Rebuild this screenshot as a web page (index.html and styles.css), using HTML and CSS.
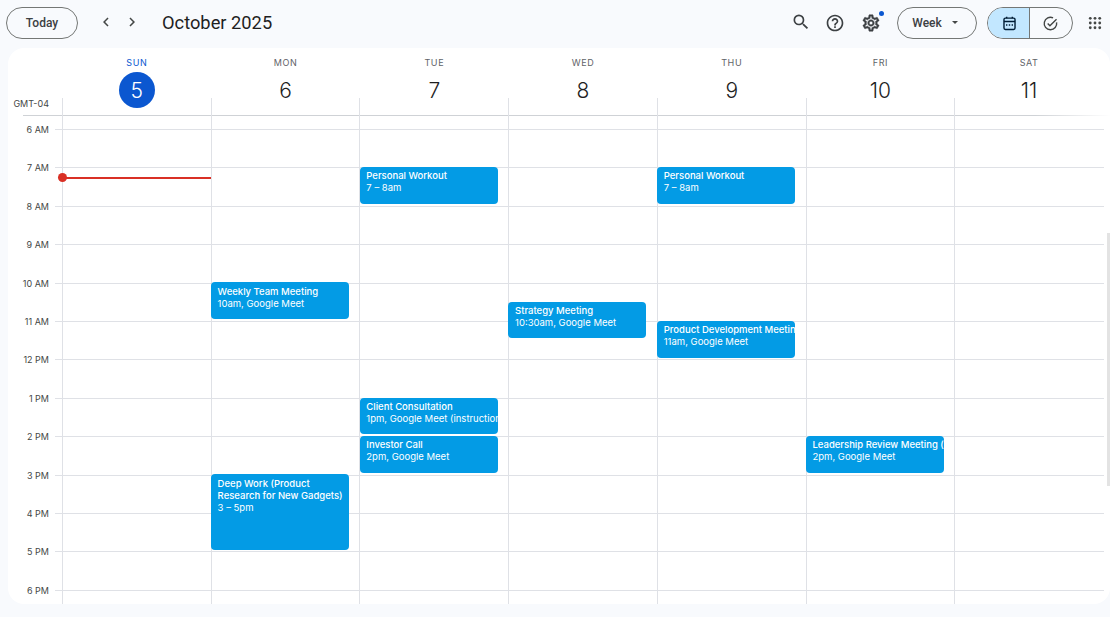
FILE: index.html
```html
<!DOCTYPE html>
<html lang="en">
<head>
<meta charset="utf-8">
<title>Calendar - October 2025</title>
<link rel="stylesheet" href="styles.css">
</head>
<body>
<header class="toolbar">
  <button class="pill today">Today</button>
  <div class="nav">
    <svg class="chev" viewBox="0 0 24 24"><path d="M15.4 7.4 14 6l-6 6 6 6 1.4-1.4L10.8 12z"/></svg>
    <svg class="chev" viewBox="0 0 24 24"><path d="M8.6 7.4 10 6l6 6-6 6-1.4-1.4 4.6-4.6z"/></svg>
  </div>
  <h1 class="title">October 2025</h1>
  <div class="spacer"></div>
  <svg class="icon search" viewBox="0 0 24 24"><path d="M15.5 14h-.79l-.28-.27A6.471 6.471 0 0 0 16 9.5 6.5 6.5 0 1 0 9.5 16c1.61 0 3.09-.59 4.23-1.57l.27.28v.79l5 4.99L20.49 19l-4.99-5zm-6 0C7.01 14 5 11.99 5 9.5S7.01 5 9.5 5 14 7.01 14 9.5 11.99 14 9.5 14z"/></svg>
  <svg class="icon help" viewBox="0 0 24 24"><path d="M11 18h2v-2h-2v2zm1-16C6.48 2 2 6.48 2 12s4.48 10 10 10 10-4.48 10-10S17.52 2 12 2zm0 18c-4.41 0-8-3.59-8-8s3.59-8 8-8 8 3.59 8 8-3.59 8-8 8zm0-14c-2.21 0-4 1.79-4 4h2c0-1.1.9-2 2-2s2 .9 2 2c0 2-3 1.75-3 5h2c0-2.25 3-2.5 3-5 0-2.21-1.79-4-4-4z"/></svg>
  <div class="gear-wrap">
    <svg class="icon gear" viewBox="0 0 24 24"><path d="M19.43 12.98c.04-.32.07-.64.07-.98 0-.34-.03-.66-.07-.98l2.11-1.65c.19-.15.24-.42.12-.64l-2-3.46c-.09-.16-.26-.25-.44-.25-.06 0-.12.01-.17.03l-2.49 1c-.52-.4-1.08-.73-1.69-.98l-.38-2.65C14.46 2.18 14.25 2 14 2h-4c-.25 0-.46.18-.49.42l-.38 2.65c-.61.25-1.17.59-1.69.98l-2.49-1c-.06-.02-.12-.03-.18-.03-.17 0-.34.09-.43.25l-2 3.46c-.13.22-.07.49.12.64l2.11 1.65c-.04.32-.07.65-.07.98 0 .33.03.66.07.98l-2.11 1.65c-.19.15-.24.42-.12.64l2 3.46c.09.16.26.25.44.25.06 0 .12-.01.17-.03l2.49-1c.52.4 1.08.73 1.69.98l.38 2.65c.03.24.24.42.49.42h4c.25 0 .46-.18.49-.42l.38-2.65c.61-.25 1.17-.59 1.69-.98l2.49 1c.06.02.12.03.18.03.17 0 .34-.09.43-.25l2-3.46c.12-.22.07-.49-.12-.64l-2.11-1.65zm-1.98-1.71c.04.31.05.52.05.73 0 .21-.02.43-.05.73l-.14 1.13.89.7 1.08.84-.7 1.21-1.27-.51-1.04-.42-.9.68c-.43.32-.84.56-1.25.73l-1.06.43-.16 1.13-.2 1.35h-1.4l-.19-1.35-.16-1.13-1.06-.43c-.43-.18-.83-.41-1.23-.71l-.91-.7-1.06.43-1.27.51-.7-1.21 1.08-.84.89-.7-.14-1.13c-.03-.31-.05-.54-.05-.74s.02-.43.05-.73l.14-1.13-.89-.7-1.08-.84.7-1.21 1.27.51 1.04.42.9-.68c.43-.32.84-.56 1.25-.73l1.06-.43.16-1.13.2-1.35h1.39l.19 1.35.16 1.13 1.06.43c.43.18.83.41 1.23.71l.91.7 1.06-.43 1.27-.51.7 1.21-1.07.85-.89.7.14 1.13zM12 8c-2.21 0-4 1.79-4 4s1.79 4 4 4 4-1.79 4-4-1.79-4-4-4zm0 6c-1.1 0-2-.9-2-2s.9-2 2-2 2 .9 2 2-.9 2-2 2z"/></svg>
    <span class="gear-dot"></span>
  </div>
  <button class="pill week">Week<span class="caret"></span></button>
  <div class="toggle">
    <div class="toggle-part active">
      <svg class="tog-icon" viewBox="0 0 24 24"><path d="M8 2.5v2.2M16 2.5v2.2" class="ln"/><rect x="4.2" y="4.4" width="15.6" height="16" rx="2" class="ln"/><path d="M4.2 9.2h15.6" class="ln"/><path d="M7 13.2h2v2H7zM11 13.2h2v2h-2zM15 13.2h2v2h-2z"/></svg>
    </div>
    <div class="toggle-part">
      <svg class="tog-icon" viewBox="0 0 24 24"><path d="M20.6 10.4A8.8 8.8 0 1 1 15.6 4" class="ln"/><path d="M8 12l3.2 3.2L20.5 6" class="ln"/></svg>
    </div>
  </div>
  <svg class="apps" viewBox="0 0 16 16"><circle cx="2.6" cy="2.6" r="1.6"/><circle cx="8" cy="2.6" r="1.6"/><circle cx="13.4" cy="2.6" r="1.6"/><circle cx="2.6" cy="8" r="1.6"/><circle cx="8" cy="8" r="1.6"/><circle cx="13.4" cy="8" r="1.6"/><circle cx="2.6" cy="13.4" r="1.6"/><circle cx="8" cy="13.4" r="1.6"/><circle cx="13.4" cy="13.4" r="1.6"/></svg>
</header>

<main class="card">
  <section class="heads">
    <div class="tz">GMT-04</div>
    <div class="head today-col"><div class="dow">SUN</div><div class="num-row"><span class="num">5</span></div></div>
    <div class="head"><div class="dow">MON</div><div class="num-row"><span class="num">6</span></div></div>
    <div class="head"><div class="dow">TUE</div><div class="num-row"><span class="num">7</span></div></div>
    <div class="head"><div class="dow">WED</div><div class="num-row"><span class="num">8</span></div></div>
    <div class="head"><div class="dow">THU</div><div class="num-row"><span class="num">9</span></div></div>
    <div class="head"><div class="dow">FRI</div><div class="num-row"><span class="num">10</span></div></div>
    <div class="head"><div class="dow">SAT</div><div class="num-row"><span class="num">11</span></div></div>
  </section>

  <section class="timeline">
    <div class="hour"><span class="hour-label">6 AM</span><span class="hour-line"></span></div>
    <div class="hour"><span class="hour-label">7 AM</span><span class="hour-line"></span></div>
    <div class="hour"><span class="hour-label">8 AM</span><span class="hour-line"></span></div>
    <div class="hour"><span class="hour-label">9 AM</span><span class="hour-line"></span></div>
    <div class="hour"><span class="hour-label">10 AM</span><span class="hour-line"></span></div>
    <div class="hour"><span class="hour-label">11 AM</span><span class="hour-line"></span></div>
    <div class="hour"><span class="hour-label">12 PM</span><span class="hour-line"></span></div>
    <div class="hour"><span class="hour-label">1 PM</span><span class="hour-line"></span></div>
    <div class="hour"><span class="hour-label">2 PM</span><span class="hour-line"></span></div>
    <div class="hour"><span class="hour-label">3 PM</span><span class="hour-line"></span></div>
    <div class="hour"><span class="hour-label">4 PM</span><span class="hour-line"></span></div>
    <div class="hour"><span class="hour-label">5 PM</span><span class="hour-line"></span></div>
    <div class="hour"><span class="hour-label">6 PM</span><span class="hour-line"></span></div>

    <div class="days">
      <div class="day">
        <div class="now" style="top:61.5px"></div>
      </div>
      <div class="day">
        <div class="event low" style="top:167px;height:37px"><b>Weekly Team Meeting</b><span>10am, Google Meet</span></div>
        <div class="event low wrap" style="top:359px;height:76px"><b>Deep Work (Product Research for New Gadgets)</b><span>3 – 5pm</span></div>
      </div>
      <div class="day">
        <div class="event" style="top:52px;height:37px"><b>Personal Workout</b><span>7 – 8am</span></div>
        <div class="event" style="top:283px;height:36px"><b>Client Consultation</b><span>1pm, Google Meet (instructions in description)</span></div>
        <div class="event" style="top:321px;height:37px"><b>Investor Call</b><span>2pm, Google Meet</span></div>
      </div>
      <div class="day">
        <div class="event" style="top:187px;height:36px"><b>Strategy Meeting</b><span>10:30am, Google Meet</span></div>
      </div>
      <div class="day">
        <div class="event" style="top:52px;height:37px"><b>Personal Workout</b><span>7 – 8am</span></div>
        <div class="event" style="top:206px;height:37px"><b>Product Development Meeting</b><span>11am, Google Meet</span></div>
      </div>
      <div class="day">
        <div class="event" style="top:321px;height:37px"><b>Leadership Review Meeting (Quarterly)</b><span>2pm, Google Meet</span></div>
      </div>
      <div class="day"></div>
    </div>
  </section>
  <div class="scrollbar"></div>
</main>
</body>
</html>
```

FILE: styles.css
```css
* { box-sizing: border-box; }

html, body {
  margin: 0;
  height: 617px;
  overflow: hidden;
  background: #f8fafd;
  font-family: "Inter", "Roboto", "Liberation Sans", sans-serif;
  color: #1f1f1f;
}

.toolbar {
  height: 48px;
  display: flex;
  align-items: flex-start;
  padding: 7px 0 0 6px;
}

.pill {
  height: 32px;
  border: 1px solid #747775;
  border-radius: 16px;
  background: transparent;
  font-family: "Roboto", "Liberation Sans", sans-serif;
  font-size: 12px;
  font-weight: 500;
  color: #3c4043;
  padding: 0;
}

.today { width: 72px; }

.nav {
  display: flex;
  gap: 8px;
  margin: 6px 0 0 19px;
}

.chev { width: 18px; height: 18px; fill: #444746; }

.title {
  margin: 0 0 0 21px;
  font-family: "Roboto", "Liberation Sans", sans-serif;
  font-size: 18.3px;
  line-height: 31px;
  font-weight: 400;
  color: #1f1f1f;
}

.spacer { flex: 1; }

.icon { fill: #3c4043; }

.search { width: 20px; height: 20px; margin-top: 5px; }
.help { width: 20px; height: 20px; margin: 6px 0 0 14px; }

.gear-wrap {
  position: relative;
  width: 20px;
  height: 20px;
  margin: 6px 0 0 16px;
}

.gear { width: 20px; height: 20px; display: block; stroke: #3c4043; stroke-width: 0.5; }

.gear-dot {
  position: absolute;
  top: -2px;
  right: -3px;
  width: 5px;
  height: 5px;
  border-radius: 50%;
  background: #0b57d0;
}

.week {
  width: 80px;
  margin-left: 16px;
  display: flex;
  align-items: center;
  justify-content: center;
  gap: 10px;
  padding-right: 4px;
}

.caret {
  width: 0;
  height: 0;
  border-left: 3.5px solid transparent;
  border-right: 3.5px solid transparent;
  border-top: 3.5px solid #444746;
  margin-top: -1px;
}

.toggle {
  width: 86px;
  height: 32px;
  margin-left: 10px;
  display: flex;
  border: 1px solid #747775;
  border-radius: 16px;
  overflow: hidden;
}

.toggle-part {
  flex: 1;
  display: flex;
  align-items: center;
  justify-content: center;
  padding-right: 2px;
}

.toggle-part.active {
  background: #c2e7ff;
  border-right: 1px solid #747775;
  padding-right: 0;
  padding-left: 1px;
}

.tog-icon { width: 17px; height: 17px; fill: #001d35; }
.toggle-part + .toggle-part .tog-icon { fill: #444746; }
.tog-icon .ln { fill: none; stroke: #001d35; stroke-width: 2; }
.toggle-part + .toggle-part .ln { stroke: #444746; }

.apps {
  width: 14px;
  height: 14px;
  margin: 9px 8px 0 15px;
  fill: #444746;
}

.card {
  position: relative;
  margin-left: 8px;
  height: 556px;
  background: #fff;
  border-radius: 16px;
  overflow: hidden;
}

.heads {
  position: relative;
  height: 68px;
  margin: 0 0 -1px 15px;
  padding-left: 39px;
  padding-right: 7px;
  display: grid;
  grid-template-columns: repeat(7, 1fr);
  border-bottom: 1px solid;
  border-image: linear-gradient(to right, #cfd2d6 0%, #cfd2d6 93%, #ffffff 100%) 1;
}

.tz {
  position: absolute;
  left: -15px;
  bottom: 5px;
  width: 41px;
  text-align: right;
  white-space: nowrap;
  font-size: 9px;
  line-height: 12px;
  color: #444746;
}

.head {
  position: relative;
  text-align: center;
  padding-top: 9px;
  padding-left: 1px;
}

.head::before {
  content: "";
  position: absolute;
  left: 0;
  top: 50px;
  bottom: 0;
  border-left: 1px solid #dfe1e6;
}

.dow {
  font-size: 9px;
  line-height: 11px;
  font-weight: 400;
  letter-spacing: 0.6px;
  color: #5f6368;
}

.num-row {
  position: relative;
  display: flex;
  justify-content: center;
  margin-top: 4px;
}

.num {
  width: 36px;
  height: 36px;
  border-radius: 50%;
  display: flex;
  align-items: center;
  justify-content: center;
  font-size: 21px;
  font-weight: 300;
  color: #1f1f1f;
}

.today-col .dow { color: #0b57d0; }
.today-col .num { background: #0b57d0; color: #fff; }

.timeline {
  position: relative;
  height: 489px;
  padding-top: 14px;
  overflow: hidden;
}

.hour {
  display: flex;
  height: 38.4px;
}

.hour-label {
  width: 41px;
  margin-top: -5px;
  height: 12px;
  text-align: right;
  font-size: 9px;
  line-height: 12px;
  color: #444746;
}

.hour-line {
  flex: 1;
  margin-left: 6px;
  margin-right: 6px;
  border-top: 1px solid #dfe1e6;
}

.days {
  position: absolute;
  left: 54px;
  right: 7px;
  top: 0;
  bottom: 0;
  display: grid;
  grid-template-columns: repeat(7, 1fr);
}

.day {
  position: relative;
  border-left: 1px solid #dfe1e6;
}

.now {
  position: absolute;
  left: 0;
  right: 0;
  height: 2px;
  background: #d93025;
}

.now::before {
  content: "";
  position: absolute;
  left: -5px;
  top: -4px;
  width: 9px;
  height: 9px;
  border-radius: 50%;
  background: #d93025;
}

.event {
  position: absolute;
  left: -0.9px;
  right: 10.6px;
  padding: 3px 0 0 6.8px;
  background: #039be5;
  color: #fff;
  border-radius: 4px;
  overflow: hidden;
  font-size: 9.5px;
  line-height: 12px;
}

.event.low { padding-top: 4px; }

.event b, .event span {
  display: block;
  white-space: nowrap;
}

.event b { font-weight: 500; }
.event.wrap b { white-space: normal; }

.scrollbar {
  position: absolute;
  right: 0;
  top: 185px;
  width: 3px;
  height: 253px;
  background: #e3e3e3;
}
```
